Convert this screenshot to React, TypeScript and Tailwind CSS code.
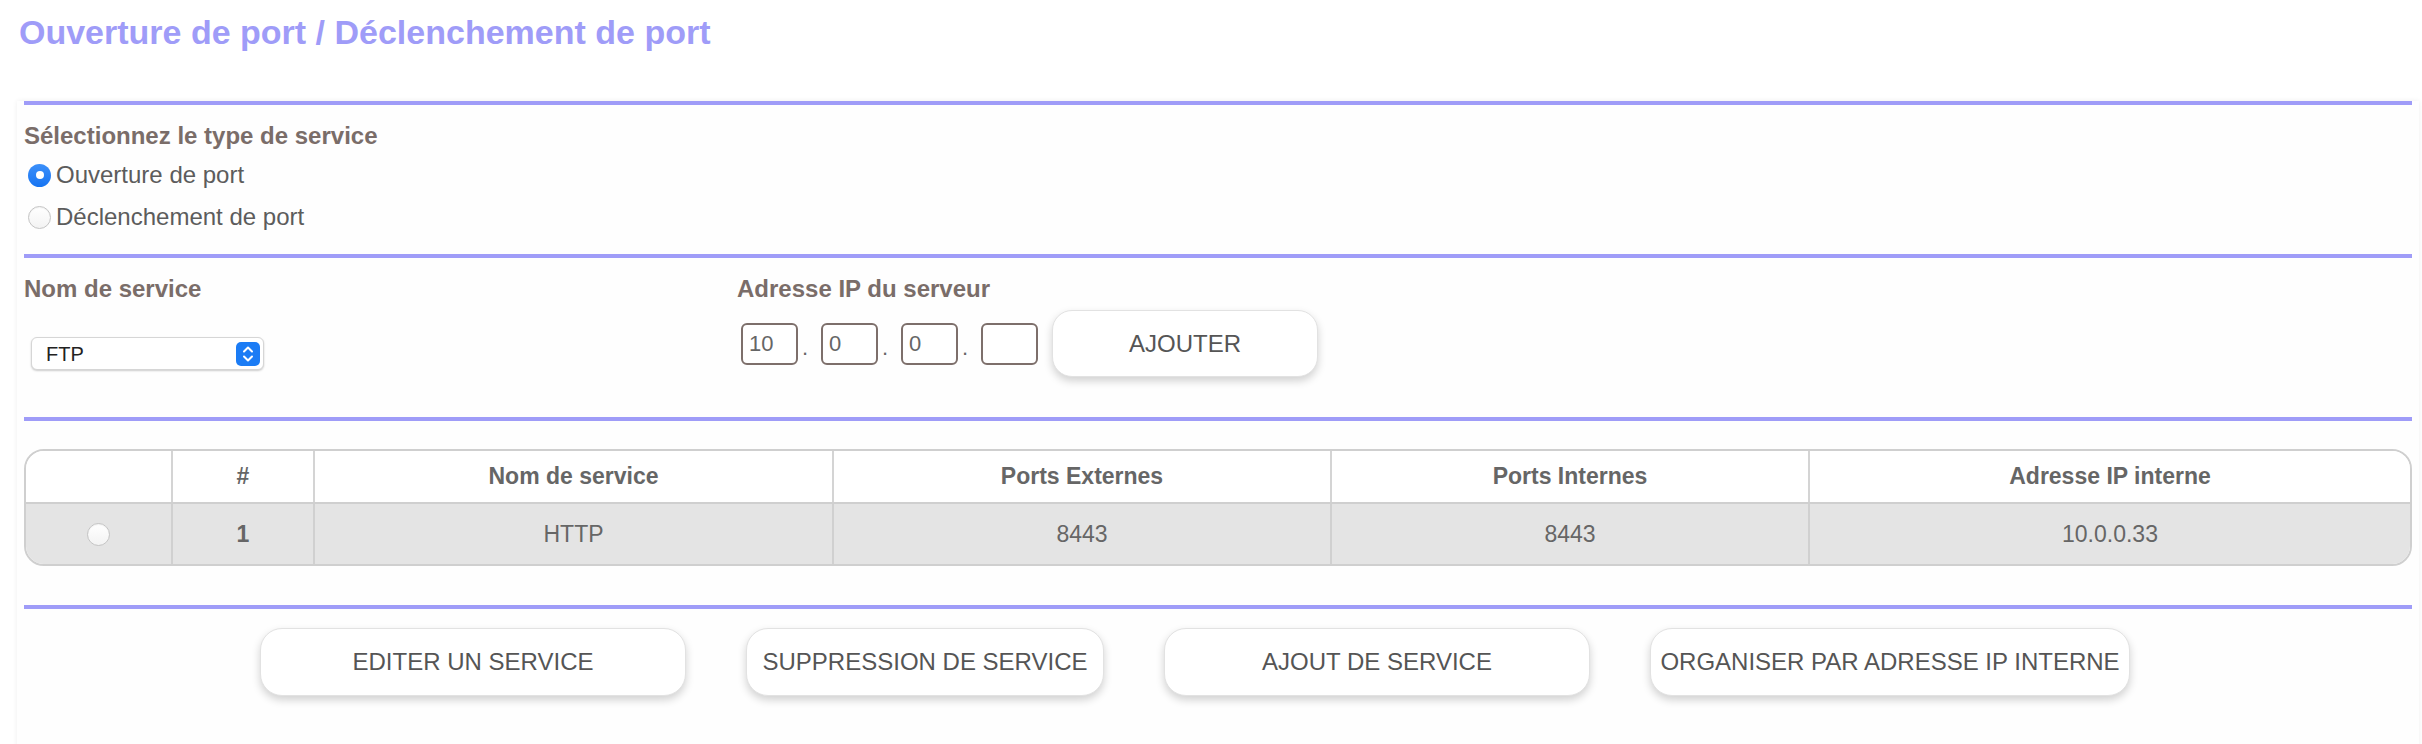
import React from 'react';

const font = { fontFamily: '"Liberation Sans", Arial, sans-serif' };

function Bar({ className = '' }: { className?: string }) {
  return <div className={`h-[4px] bg-[#9f9cf8] ${className}`}></div>;
}

function Radio({ checked }: { checked?: boolean }) {
  if (checked) {
    return (
      <span className="flex h-[23px] w-[23px] shrink-0 items-center justify-center rounded-full bg-gradient-to-b from-[#3b8ff9] to-[#1574f2]">
        <span className="h-[8px] w-[8px] rounded-full bg-white"></span>
      </span>
    );
  }
  return (
    <span className="block h-[23px] w-[23px] shrink-0 rounded-full border border-[#c4c4c4] bg-gradient-to-b from-white to-[#f3f3f3] shadow-[inset_0_1px_1px_rgba(0,0,0,0.05)]"></span>
  );
}

function IpBox({ value }: { value: string }) {
  return (
    <div className="flex h-[42px] w-[57px] items-center rounded-[6px] border-2 border-[#7d6f6b] bg-white pl-[6px] text-[22px] text-[#666]">
      {value}
    </div>
  );
}

function Dot() {
  return <span className="w-[23px] self-end pb-[6px] pl-[4px] text-left text-[22px] leading-none text-[#666]">.</span>;
}

function Btn({ label, width }: { label: string; width: string }) {
  return (
    <button
      className={`${width} flex h-[68px] items-center justify-center rounded-[22px] border border-[#e2e2e2] bg-white text-[24px] text-[#555] shadow-[0_4px_8px_rgba(0,0,0,0.18)]`}
    >
      {label}
    </button>
  );
}

const cols = [
  { w: 'w-[145px]', head: '', cell: 'radio' },
  { w: 'w-[142px]', head: '#', cell: '1' },
  { w: 'w-[519px]', head: 'Nom de service', cell: 'HTTP' },
  { w: 'w-[498px]', head: 'Ports Externes', cell: '8443' },
  { w: 'w-[478px]', head: 'Ports Internes', cell: '8443' },
  { w: 'flex-1', head: 'Adresse IP interne', cell: '10.0.0.33' },
];

export default function App() {
  return (
    <div className="h-[744px] w-[2422px] overflow-hidden bg-white" style={font}>
      <h1 className="h-[50px] pl-[19px] pt-[15px] text-[34px] font-bold leading-[35px] text-[#9f9cf8]">
        Ouverture de port / Déclenchement de port
      </h1>

      <div className="ml-[17px] h-[694px] w-[2402px] bg-[#fefefe] px-[7px] shadow-[0_0_5px_rgba(0,0,0,0.07)]">
        <Bar className="mt-[51px]" />

        <div className="mt-[17px] text-[24px] font-bold leading-[28px] text-[#7a6d69]">
          Sélectionnez le type de service
        </div>
        <div className="mt-[4px]">
          <label className="flex h-[42px] items-center gap-[5px] pl-[4px] text-[24px] text-[#5c5c5c]">
            <Radio checked />
            Ouverture de port
          </label>
          <label className="flex h-[42px] items-center gap-[5px] pl-[4px] text-[24px] text-[#5c5c5c]">
            <Radio />
            Déclenchement de port
          </label>
        </div>

        <Bar className="mt-[16px]" />

        <div className="flex">
          <div className="w-[713px]">
            <div className="mt-[17px] text-[24px] font-bold leading-[28px] text-[#7a6d69]">Nom de service</div>
            <div className="ml-[7px] mt-[34px] flex h-[33px] w-[233px] items-center justify-between rounded-[6px] border border-[#d6d6d6] bg-white pl-[14px] pr-[3px] text-[20px] text-[#222] shadow-[0_1px_2px_rgba(0,0,0,0.2)]">
              <span>FTP</span>
              <svg width="24" height="24" viewBox="0 0 24 24">
                <rect x="0" y="0" width="24" height="24" rx="5" fill="#1b7cf5" />
                <path d="M8 9.5 L12 5.5 L16 9.5" fill="none" stroke="white" strokeWidth="2" strokeLinecap="round" strokeLinejoin="round" />
                <path d="M8 14.5 L12 18.5 L16 14.5" fill="none" stroke="white" strokeWidth="2" strokeLinecap="round" strokeLinejoin="round" />
              </svg>
            </div>
          </div>
          <div>
            <div className="mt-[17px] text-[24px] font-bold leading-[28px] text-[#7a6d69]">Adresse IP du serveur</div>
            <div className="mt-[7px] flex items-center pl-[4px]">
              <div className="flex h-[42px]">
                <IpBox value="10" />
                <Dot />
                <IpBox value="0" />
                <Dot />
                <IpBox value="0" />
                <Dot />
                <IpBox value="" />
              </div>
              <button className="ml-[14px] flex h-[67px] w-[266px] items-center justify-center rounded-[20px] border border-[#e2e2e2] bg-white text-[24px] text-[#555] shadow-[0_4px_8px_rgba(0,0,0,0.18)]">
                AJOUTER
              </button>
            </div>
          </div>
        </div>

        <Bar className="mt-[40px]" />

        <div className="mt-[28px] overflow-hidden rounded-[20px] border-2 border-[#cfcfcf]">
          <div className="flex h-[51px] bg-white">
            {cols.map((c, i) => (
              <div
                key={i}
                className={`${c.w} flex items-center justify-center text-[23px] font-bold text-[#666] ${i > 0 ? 'border-l-2 border-[#d4d4d4]' : ''}`}
              >
                {c.head}
              </div>
            ))}
          </div>
          <div className="flex h-[62px] border-t-2 border-[#cfcfcf] bg-[#e4e4e4]">
            {cols.map((c, i) => (
              <div
                key={i}
                className={`${c.w} flex items-center justify-center text-[23px] text-[#666] ${i === 1 ? 'font-bold' : ''} ${i > 0 ? 'border-l-2 border-[#d0d0d0]' : ''}`}
              >
                {c.cell === 'radio' ? <Radio /> : c.cell}
              </div>
            ))}
          </div>
        </div>

        <Bar className="mt-[39px]" />

        <div className="mt-[19px] flex gap-[60px] pl-[236px]">
          <Btn label="EDITER UN SERVICE" width="w-[426px]" />
          <Btn label="SUPPRESSION DE SERVICE" width="w-[358px]" />
          <Btn label="AJOUT DE SERVICE" width="w-[426px]" />
          <Btn label="ORGANISER PAR ADRESSE IP INTERNE" width="w-[480px]" />
        </div>
      </div>
    </div>
  );
}
